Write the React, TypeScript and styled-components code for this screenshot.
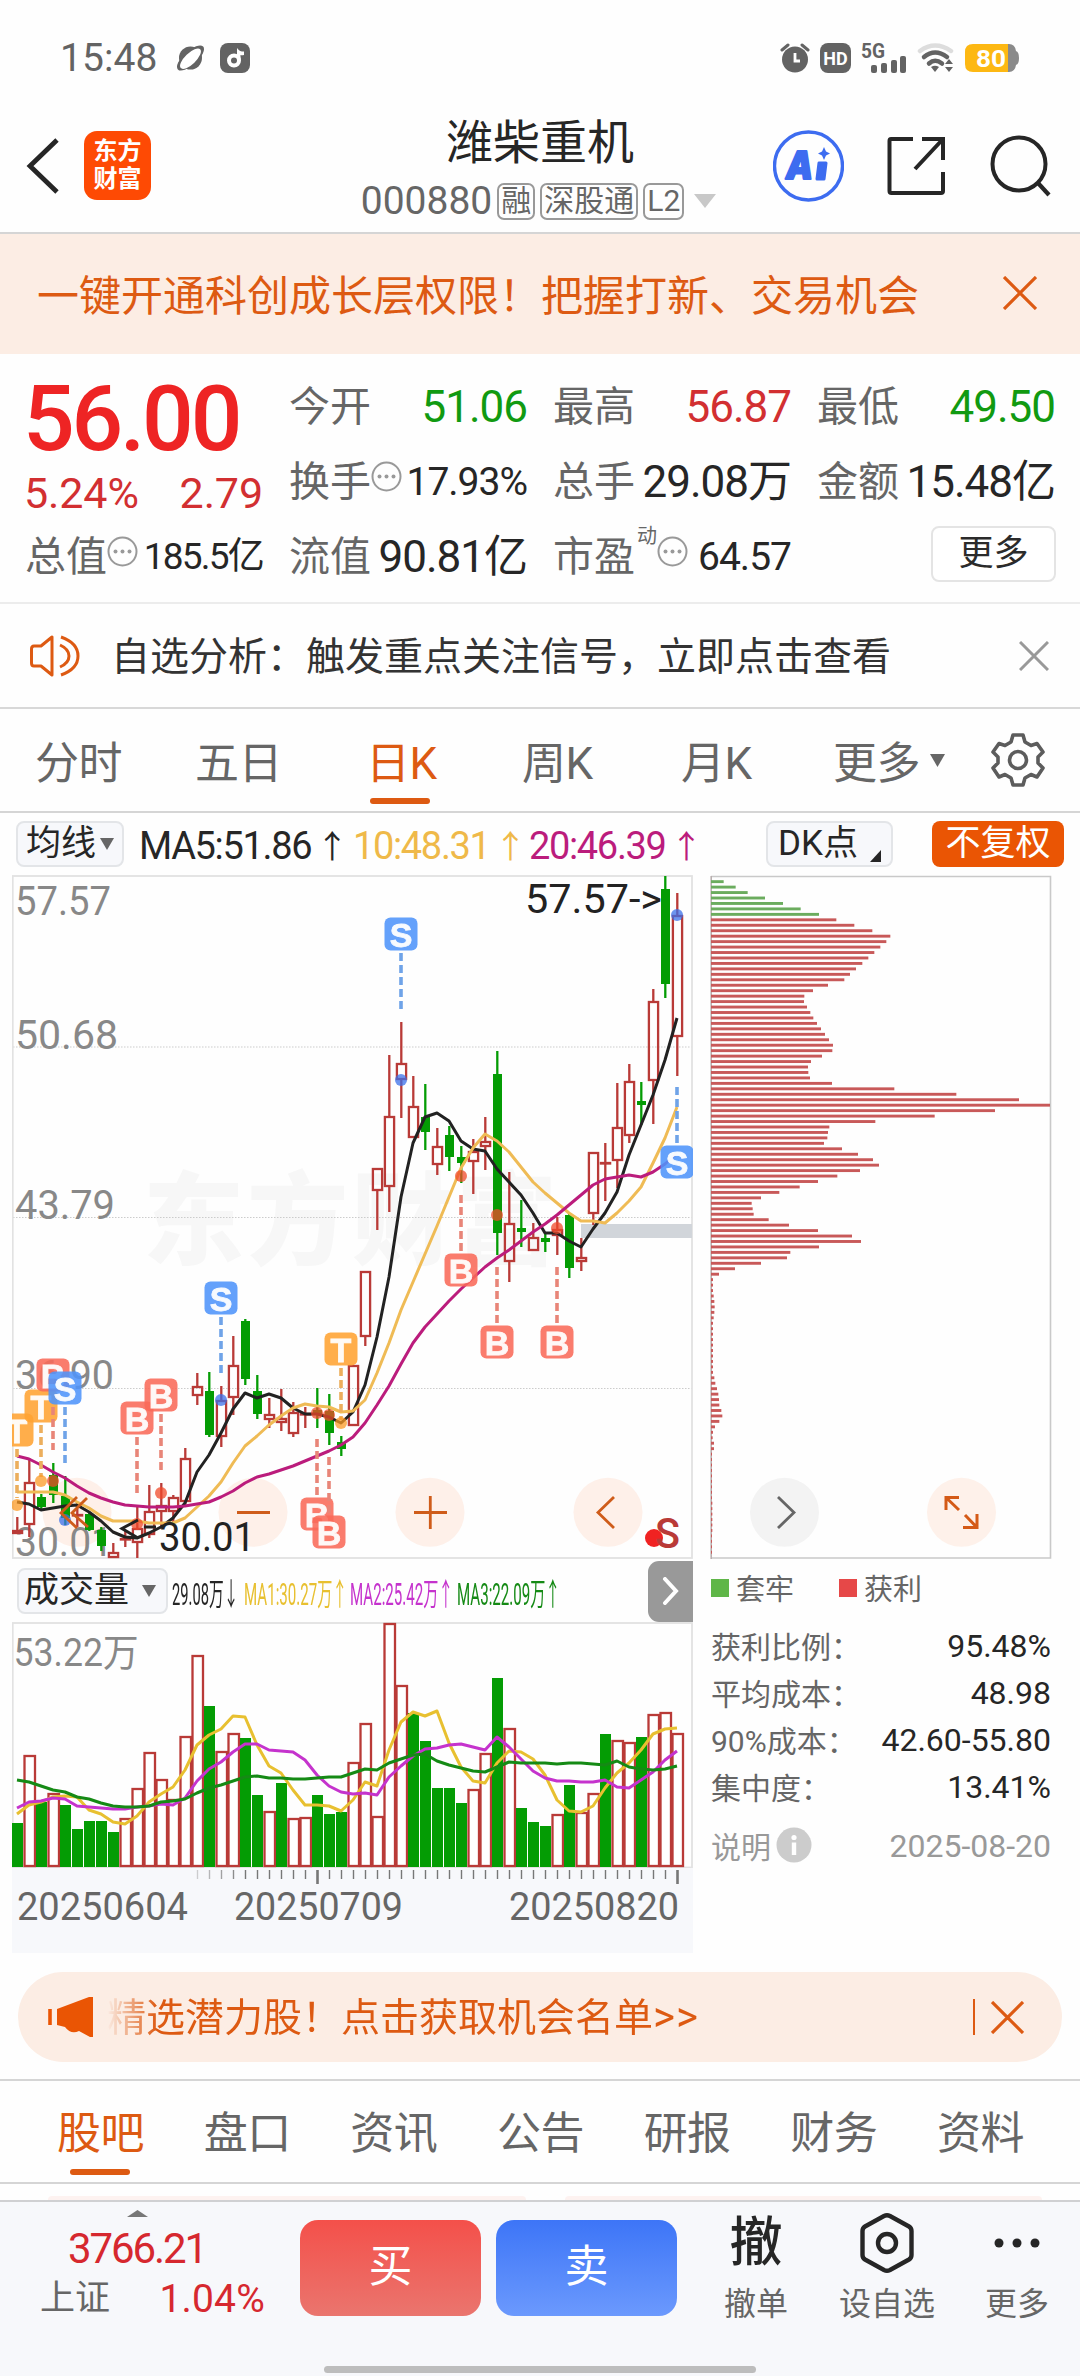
import React from "react";
import styled, { createGlobalStyle } from "styled-components";

const UP = "#b93a37";
const DOWN = "#049c04";
const ACCENT = "#dd5a12";

const Global = createGlobalStyle`
  * { box-sizing: border-box; }
  body { margin: 0; background: #fff; }
  svg { display: block; flex: none; }
`;

const Page = styled.div`
  width: 1080px;
  height: 2376px;
  overflow: hidden;
  display: flex;
  flex-direction: column;
  background: #fefefe;
  color: #2b2b2b;
  font-family: Roboto, "Noto Sans CJK SC", sans-serif;
  white-space: nowrap;
`;

/* ---------- status bar ---------- */
const StatusBar = styled.div`
  height: 100px;
  padding: 16px 61px 0 60px;
  display: flex;
  align-items: center;
  justify-content: space-between;
  color: #636363;
`;
const StatusGroup = styled.div<{ $gap: number }>`
  display: flex;
  align-items: center;
  gap: ${(p) => p.$gap}px;
`;
const Clock = styled.span`
  font-size: 39px;
  line-height: 40px;
  letter-spacing: 0.1px;
  margin-right: 3px;
`;

/* ---------- header ---------- */
const Header = styled.header`
  height: 134px;
  display: flex;
  border-bottom: 2px solid #d5d5d5;
`;
const HeaderSide = styled.div<{ $pad: string; $gap: number }>`
  width: 307px;
  display: flex;
  align-items: center;
  padding: ${(p) => p.$pad};
  gap: ${(p) => p.$gap}px;
`;
const Logo = styled.div`
  width: 67px;
  height: 69px;
  border-radius: 13px;
  background: #fe4a04;
  color: #fff;
  font-size: 24px;
  font-weight: 700;
  line-height: 28px;
  padding-bottom: 2px;
  display: flex;
  flex-direction: column;
  align-items: center;
  justify-content: center;
`;
const HeaderMid = styled.div`
  flex: 1;
  display: flex;
  flex-direction: column;
  align-items: center;
  padding-top: 16px;
`;
const Title = styled.h1`
  margin: 0;
  font-size: 47px;
  line-height: 54px;
  font-weight: 400;
  color: #262626;
`;
const CodeRow = styled.div`
  display: flex;
  align-items: center;
  height: 40px;
  margin-top: 11px;
  margin-left: -3px;
  gap: 5px;
  color: #666;
  font-size: 39px;
`;
const Tag = styled.span`
  height: 37px;
  border: 2px solid #999;
  border-radius: 7px;
  padding: 0 2px;
  font-size: 30px;
  line-height: 31px;
`;

/* ---------- banner ---------- */
const Banner = styled.div`
  height: 120px;
  background: #fcede4;
  color: ${ACCENT};
  display: flex;
  align-items: center;
  justify-content: space-between;
  padding: 0 43px 2px 37px;
  font-size: 42px;
  & > span { margin-bottom: 2px; }
`;

/* ---------- quote ---------- */
const Quote = styled.section`
  height: 250px;
  padding: 15px 25px 0 26px;
  border-bottom: 2px solid #ececec;
  display: grid;
  grid-template-columns: repeat(4, 237px);
  grid-template-rows: repeat(3, 75px);
  column-gap: 27px;
`;
const PriceCell = styled.div`
  grid-row: span 2;
  color: #ee2424;
  margin-left: -3px;
`;
const Price = styled.div`
  font-size: 91px;
  font-weight: 500;
  line-height: 100px;
  letter-spacing: -3.2px;
`;
const Change = styled.div`
  display: flex;
  justify-content: space-between;
  font-size: 43px;
  line-height: 48px;
  letter-spacing: -0.1px;
  margin-left: 1px;
  color: #d22f31;
`;
const Cell = styled.div`
  display: flex;
  align-items: center;
  justify-content: space-between;
`;
const Label = styled.span`
  display: flex;
  align-items: center;
  font-size: 41px;
  line-height: 50px;
  margin-left: -1px;
  color: #666;
  & > svg { margin-bottom: 10px; }
`;
const Sup = styled.span`
  align-self: flex-start;
  font-size: 20px;
  line-height: 20px;
  margin: -6px 0 0 2px;
`;
const Value = styled.span<{ $color?: string; $size?: number; $ls?: number }>`
  font-size: ${(p) => p.$size ?? 44}px;
  line-height: 50px;
  letter-spacing: ${(p) => p.$ls ?? -1}px;
  color: ${(p) => p.$color ?? "#262626"};
`;
const MoreButton = styled.button`
  justify-self: end;
  align-self: center;
  width: 125px;
  height: 56px;
  margin: -6px -1px 0 0;
  border: 2px solid #e4e4e4;
  border-radius: 8px;
  background: #fff;
  padding: 0;
  font: 400 35px/48px Roboto, "Noto Sans CJK SC", sans-serif;
  color: #2b2b2b;
`;

/* ---------- notice ---------- */
const Notice = styled.div`
  height: 105px;
  border-bottom: 2px solid #d8d8d8;
  display: flex;
  align-items: center;
  padding: 0 31px 0 30px;
  font-size: 39px;
  color: #333;
`;
const NoticeText = styled.span`
  flex: 1;
  margin: 0 0 5px 31px;
`;

/* ---------- tabs ---------- */
const Tabs = styled.nav`
  height: 103px;
  border-bottom: 2px solid #d5d5d5;
  display: flex;
  justify-content: space-between;
  padding: 0 56px 0 57px;
`;
const PeriodTabs = styled.nav`
  height: 104px;
  border-bottom: 2px solid #d5d5d5;
  display: grid;
  grid-template-columns: 160px 171px 156px 159px 152px 158px 54px;
  justify-items: start;
  align-items: center;
  padding-left: 35px;
`;
const Tab = styled.span<{ $on?: boolean; $lift?: number }>`
  height: 101px;
  padding-bottom: ${(p) => p.$lift ?? 0}px;
  display: flex;
  align-items: center;
  position: relative;
  font-size: 44px;
  letter-spacing: -0.5px;
  color: ${(p) => (p.$on ? ACCENT : "#666")};
  &::after {
    content: "";
    display: ${(p) => (p.$on ? "block" : "none")};
    position: absolute;
    left: 50%;
    margin-left: -31px;
    bottom: 7px;
    width: 60px;
    height: 6px;
    border-radius: 3px;
    background: ${ACCENT};
  }
`;

/* ---------- indicator toolbar ---------- */
const Toolbar = styled.div`
  height: 62px;
  display: flex;
  align-items: center;
  padding: 0 16px;
`;
const Chip = styled.span<{ $w: number; $solid?: boolean; $ml?: number; $pr?: number }>`
  flex: none;
  width: ${(p) => p.$w}px;
  height: 46px;
  margin-left: ${(p) => p.$ml ?? 0}px;
  padding-right: ${(p) => p.$pr ?? 0}px;
  border-radius: 8px;
  border: ${(p) => (p.$solid ? "0" : "2px solid #e3e5e8")};
  background: ${(p) => (p.$solid ? "#ea5504" : "#f7f8fb")};
  color: ${(p) => (p.$solid ? "#fff" : "#262626")};
  display: flex;
  align-items: center;
  justify-content: center;
  gap: 4px;
  font-size: 35px;
  line-height: 40px;
`;
const Corner = styled.i`
  align-self: flex-end;
  margin: 0 0 3px 8px;
`;
const MaText = styled.span<{ $w: number; $color: string }>`
  flex: none;
  width: ${(p) => p.$w}px;
  padding: 3px 0 0 15px;
  color: ${(p) => p.$color};
  font-size: 38px;
  letter-spacing: -1.35px;
  display: flex;
  align-items: center;
`;
const Arrow = styled.span`
  flex: none;
  font-family: "Noto Sans CJK SC", sans-serif;
  font-size: 32px;
  line-height: 40px;
  margin: 0 0 3px 5px;
`;

/* ---------- chart area ---------- */
const Charts = styled.div`
  display: flex;
  height: 1079px;
  padding-left: 12px;
`;
const LeftCol = styled.div`
  width: 681px;
  margin-right: 17px;
`;
const RightCol = styled.div`
  width: 342px;
`;
const VolBar = styled.div`
  height: 62px;
  display: flex;
  align-items: center;
  padding-left: 5px;
`;
const VolName = styled.span`
  margin-right: 9px;
`;
const VolItem = styled.span<{ $w: number; $color: string; $s: number; $ml?: number }>`
  width: ${(p) => p.$w}px;
  margin-left: ${(p) => p.$ml ?? 0}px;
  color: ${(p) => p.$color};
  font-size: 31px;
  & > span {
    display: inline-block;
    transform: scaleX(${(p) => p.$s});
    transform-origin: left center;
  }
`;
const NextButton = styled.span`
  margin-left: auto;
  width: 45px;
  height: 61px;
  border-radius: 11px 0 0 11px;
  background: #999;
  display: flex;
  align-items: center;
  justify-content: center;
`;
const Axis = styled.div`
  height: 85px;
  background: #f7f8fb;
`;
const Legend = styled.div`
  height: 62px;
  padding-bottom: 9px;
  display: flex;
  align-items: center;
  font-size: 29px;
  color: #666;
`;
const Swatch = styled.i<{ $c: string; $ml?: number }>`
  width: 18px;
  height: 18px;
  margin: 2px 7px 0 ${(p) => p.$ml ?? 1}px;
  background: ${(p) => p.$c};
`;
const Stat = styled.div<{ $muted?: boolean }>`
  height: 47px;
  margin-top: ${(p) => (p.$muted ? 12 : 0)}px;
  padding: 0 1px 0 1px;
  display: flex;
  justify-content: space-between;
  align-items: center;
  font-size: 30px;
  color: ${(p) => (p.$muted ? "#999" : "#666")};
  & > b {
    font-weight: 400;
    font-size: 32px;
    color: ${(p) => (p.$muted ? "#999" : "#262626")};
  }
  & > span {
    display: flex;
    align-items: center;
    gap: 5px;
    margin-bottom: 2px;
  }
`;

/* ---------- promo ---------- */
const Promo = styled.div`
  height: 90px;
  margin: 18px 18px 17px;
  border-radius: 45px;
  background: #fcede4;
  color: ${ACCENT};
  display: flex;
  align-items: center;
  padding: 0 38px 0 29px;
  font-size: 39px;
`;
const PromoText = styled.span`
  flex: 1;
  margin: 0 0 6px 14px;
  -webkit-mask-image: linear-gradient(90deg, transparent 0, #000 50px);
  mask-image: linear-gradient(90deg, transparent 0, #000 50px);
  & > i {
    font-style: normal;
    font-size: 42px;
    letter-spacing: 1px;
  }
`;
const Divider = styled.i`
  width: 2px;
  height: 36px;
  margin-right: 16px;
  background: ${ACCENT};
`;
const TopLine = styled.div`
  border-top: 2px solid #d5d5d5;
`;

const Peek = styled.div`
  height: 16px;
  display: flex;
  gap: 39px;
  padding: 12px 38px 0 48px;
  & > i {
    flex: 1;
    border-radius: 12px 12px 0 0;
    background: #fdf2f0;
  }
`;

/* ---------- bottom bar ---------- */
const Bottom = styled.footer`
  flex: 1;
  background: #f7f8fb;
  border-top: 2px solid #d0d0d2;
  display: flex;
  flex-direction: column;
  align-items: center;
`;
const BottomRow = styled.div`
  width: 1080px;
  height: 164px;
  display: flex;
`;
const Index = styled.div`
  width: 300px;
  padding: 8px 35px 0 40px;
  color: #d6282f;
  display: flex;
  flex-direction: column;
  & > svg { margin-left: 87px; }
`;
const IndexValue = styled.div`
  font-size: 42px;
  line-height: 50px;
  margin: 7px 0 0 28px;
  letter-spacing: -2.1px;
`;
const IndexRow = styled.div`
  display: flex;
  justify-content: space-between;
  align-items: center;
  line-height: 50px;
  font-size: 39px;
  letter-spacing: 0.2px;
  & > span {
    color: #666;
    font-size: 35px;
    letter-spacing: 0;
  }
`;
const Trade = styled.button<{ $from: string; $to: string }>`
  width: 181px;
  height: 96px;
  margin: 18px 15px 0 0;
  padding: 0 0 2px;
  border: 0;
  border-radius: 18px;
  background: linear-gradient(${(p) => p.$from}, ${(p) => p.$to});
  color: #fff;
  font: 400 44px/60px Roboto, "Noto Sans CJK SC", sans-serif;
`;
const Action = styled.div<{ $w: number }>`
  width: ${(p) => p.$w}px;
  display: flex;
  flex-direction: column;
  align-items: center;
  font-size: 32px;
  line-height: 40px;
  color: #666;
`;
const ActionIcon = styled.div`
  height: 82px;
  display: flex;
  align-items: center;
  font-size: 53px;
  font-weight: 500;
  color: #262626;
`;
const HomeBar = styled.i`
  width: 432px;
  height: 7px;
  border-radius: 4px;
  background: #bdbdbd;
`;

/* ---------- icons ---------- */
const Cross = ({ s, c, w = 3 }: { s: number; c: string; w?: number }) => (
  <svg width={s} height={s} viewBox={`0 0 ${s} ${s}`}>
    <path d={`M1 1L${s - 1} ${s - 1}M${s - 1} 1L1 ${s - 1}`} stroke={c} strokeWidth={w} fill="none" />
  </svg>
);
const Caret = ({ w, h, c, up }: { w: number; h: number; c: string; up?: boolean }) => (
  <svg width={w} height={h}>
    <path d={up ? `M0 ${h}H${w}L${w / 2} 0Z` : `M0 0H${w}L${w / 2} ${h}Z`} fill={c} />
  </svg>
);
const Dots = () => (
  <svg width="31" height="31" viewBox="0 0 31 31">
    <circle cx="15.500" cy="15.500" r="14" fill="none" stroke="#999" strokeWidth="2" />
    <g fill="#999">
      <circle cx="8.500" cy="15.500" r="2" />
      <circle cx="15.500" cy="15.500" r="2" />
      <circle cx="22.500" cy="15.500" r="2" />
    </g>
  </svg>
);

/* ---------- data ---------- */
// [isUp, high, low, bodyTop, bodyBottom] in chart pixels
const candles: [number, number, number, number, number][] = [
  [1, 642, 659, 655, 659], [1, 583, 662, 607, 650], [0, 619, 635, 622, 632], [0, 588, 628, 600, 620],
  [0, 601, 650, 621, 643], [1, 628, 652, 639, 640], [0, 637, 656, 639, 655], [0, 652, 676, 655, 671],
  [1, 668, 683, 677, 683], [1, 655, 672, 663, 664], [1, 632, 683, 653, 668], [1, 610, 663, 636, 660],
  [1, 608, 653, 630, 637], [1, 620, 648, 622, 637], [1, 573, 630, 583, 627], [1, 498, 530, 511, 521],
  [0, 497, 562, 516, 560], [1, 511, 572, 525, 562], [1, 461, 540, 490, 523], [0, 444, 510, 446, 504],
  [0, 500, 544, 516, 539], [1, 523, 553, 539, 545], [1, 514, 556, 543, 548], [1, 527, 562, 537, 559],
  [1, 532, 553, 538, 539], [0, 513, 553, 535, 540], [0, 519, 570, 536, 558], [0, 561, 581, 567, 574],
  [1, 490, 551, 490, 551], [1, 396, 471, 396, 462], [1, 293, 355, 293, 316], [1, 180, 337, 241, 312],
  [1, 147, 243, 188, 205], [1, 201, 263, 231, 263], [0, 209, 275, 242, 257], [1, 253, 300, 271, 290],
  [0, 251, 296, 260, 282], [0, 271, 308, 282, 288], [1, 264, 319, 276, 287], [1, 242, 295, 266, 272],
  [0, 176, 380, 199, 358], [1, 297, 407, 348, 387], [0, 325, 372, 353, 355], [1, 348, 376, 362, 376],
  [0, 359, 377, 363, 366], [1, 342, 380, 354, 361], [0, 339, 403, 340, 393], [1, 363, 396, 382, 387],
  [1, 277, 350, 277, 339], [1, 268, 326, 287, 288], [1, 208, 313, 252, 286], [1, 189, 268, 206, 261],
  [0, 207, 250, 226, 230], [1, 114, 249, 126, 206], [0, 1, 123, 14, 109], [1, 18, 201, 40, 162],
];
const ma5 = [627, 629, 635, 633, 631, 630, 637, 646, 657, 662, 663, 658, 652, 643, 628, 597, 580, 558, 534, 518, 523, 519, 523, 533, 539, 539, 542, 548, 537, 510, 462, 402, 322, 268, 242, 238, 246, 266, 274, 276, 294, 307, 320, 338, 358, 358, 366, 372, 354, 338, 317, 280, 250, 220, 185, 143];
const ma10 = [617, 617, 617, 617, 620, 627, 633, 641, 646, 646, 646, 648, 648, 648, 643, 632, 621, 607, 588, 571, 561, 550, 541, 533, 529, 531, 532, 537, 536, 525, 498, 468, 435, 407, 379, 351, 322, 293, 273, 259, 266, 277, 292, 307, 318, 328, 338, 346, 346, 348, 338, 326, 312, 288, 263, 232];
const ma20 = [581, 584, 590, 597, 603, 611, 618, 623, 627, 630, 631, 632, 632, 632, 631, 629, 627, 622, 616, 608, 602, 599, 595, 591, 586, 581, 576, 570, 562, 548, 530, 511, 489, 468, 452, 439, 426, 414, 403, 392, 383, 375, 366, 357, 349, 340, 330, 320, 310, 304, 302, 300, 302, 297, 289, 278];

type Mark = { i: number; k: "S" | "B" | "T"; y: number; from: number; to: number; dot: number };
const marks: Mark[] = [
  { i: 0, k: "T", y: 555, from: 574, to: 623, dot: 630 },
  { i: 2, k: "T", y: 531, from: 550, to: 602, dot: 606 },
  { i: 3, k: "B", y: 500, from: 532, to: 575, dot: 606 },
  { i: 4, k: "S", y: 513, from: 532, to: 588, dot: 645 },
  { i: 10, k: "B", y: 543, from: 562, to: 618, dot: 649 },
  { i: 12, k: "B", y: 520, from: 539, to: 595, dot: 618 },
  { i: 17, k: "S", y: 423, from: 442, to: 498, dot: 525 },
  { i: 25, k: "B", y: 639, from: 564, to: 620, dot: 538 },
  { i: 26, k: "B", y: 657, from: 582, to: 638, dot: 540 },
  { i: 27, k: "T", y: 474, from: 493, to: 545, dot: 548 },
  { i: 32, k: "S", y: 59, from: 78, to: 134, dot: 205 },
  { i: 37, k: "B", y: 395, from: 320, to: 376, dot: 301 },
  { i: 40, k: "B", y: 467, from: 392, to: 448, dot: 340 },
  { i: 45, k: "B", y: 467, from: 392, to: 448, dot: 353 },
  { i: 55, k: "S", y: 287, from: 212, to: 268, dot: 40 },
];
const markColor = { S: "#4f94fb", B: "#f96a59", T: "#ffa332" };
const lineColor = { S: "#6fa3e8", B: "#e88578", T: "#ecae5c" };
const dotColor = { S: "#3b70ea", B: "#f04a2a", T: "#fb9a24" };

// positive heights rise, negative fall; the number is the bar's top edge
const volumes = [-201, 133, -180, 171, -183, -207, -199, -199, -210, 196, 166, 130, 157, 177, 114, 33, -84, 129, 111, -116, -173, 189, -161, 196, 195, -173, -192, -190, 140, 101, 194, 1, 63, -91, -119, -166, -166, -181, 167, 131, -56, 106, -186, -200, -204, 192, -163, 190, 171, -112, 118, 120, -115, 92, 90, 111];
const vma1 = [192, 183, 180, 175, 174, 175, 188, 192, 200, 202, 194, 180, 172, 165, 148, 123, 113, 107, 94, 95, 123, 144, 151, 168, 183, 183, 184, 189, 178, 160, 164, 128, 100, 90, 94, 89, 121, 145, 159, 161, 141, 129, 130, 137, 153, 178, 189, 190, 184, 166, 151, 141, 128, 112, 107, 106];
const vma2 = [186, 180, 179, 176, 177, 184, 185, 186, 187, 187, 185, 184, 182, 183, 176, 159, 147, 140, 130, 122, 122, 128, 129, 130, 138, 153, 164, 170, 172, 171, 173, 155, 144, 134, 127, 126, 123, 122, 125, 128, 115, 125, 137, 149, 156, 159, 159, 160, 160, 158, 165, 166, 158, 150, 138, 129];
const vma3 = [158, 160, 164, 168, 170, 175, 177, 181, 184, 185, 185, 184, 180, 179, 177, 171, 166, 163, 159, 155, 154, 156, 156, 157, 157, 156, 155, 155, 151, 147, 148, 141, 137, 133, 132, 139, 143, 146, 149, 150, 145, 140, 141, 141, 141, 142, 141, 141, 142, 143, 139, 145, 147, 148, 147, 144];

// chip distribution, in thirds of a pixel
const chips = [38, 74, 110, 162, 216, 269, 324, 376, 430, 484, 538, 526, 508, 490, 472, 454, 435, 417, 400, 351, 306, 280, 279, 288, 298, 307, 318, 330, 342, 354, 366, 364, 333, 300, 291, 292, 297, 363, 550, 736, 924, 1017, 852, 671, 493, 355, 351, 349, 339, 393, 441, 486, 504, 447, 379, 321, 266, 205, 150, 122, 125, 128, 173, 234, 321, 423, 450, 324, 238, 228, 150, 72, 24, 6, 6, 6, 8, 10, 11, 10, 8, 6, 6, 6, 6, 6, 6, 6, 6, 6, 6, 10, 13, 18, 22, 24, 25, 31, 34, 25, 12, 6, 5, 9, 9, 3, 3, 3, 3, 3, 3, 3, 3, 3, 4, 4, 4, 4, 4, 4, 3, 3, 3, 3];

const cx = (i: number) => 5 + i * 12;
const line = (ys: number[]) => ys.map((y, i) => `${cx(i)},${y}`).join(" ");

const T = ({ x, y, w, s = 40, c = "#888", children }: { x: number; y: number; w: number; s?: number; c?: string; children: string }) => (
  <text x={x} y={y} fontSize={s} fill={c} textLength={w} lengthAdjust="spacingAndGlyphs">
    {children}
  </text>
);

const KLine = () => (
  <svg width="681" height="685" viewBox="0 0 681 685">
    <g fontFamily='"Noto Sans CJK SC", sans-serif' fontWeight="900" fontSize="101" fill="#f7f7f7">
      <text x="131" y="382" textLength="414">东方财富</text>
    </g>
    {[65, 241, 418, 596].map((x) => (
      <circle key={x} cx={x} cy="637.300" r="34.500" fill="#fef0e9" />
    ))}
    {[172, 342.500, 513.500].map((y) => (
      <path key={y} d={`M1 ${y}H680`} stroke="#ccc" strokeWidth="1.200" strokeDasharray="1.500 1.500" />
    ))}
    <rect x="0.750" y="1" width="679.250" height="682" fill="none" stroke="#e2e2e2" strokeWidth="1.800" />
    <T x={3} y={40} w={96}>57.57</T>
    <T x={3} y={173.500} w={103}>50.68</T>
    <T x={3} y={344} w={100}>43.79</T>
    <T x={3} y={514} w={99}>36.90</T>
    <T x={3} y={681} w={98}>30.01</T>
    <rect x="569" y="349" width="111" height="14" fill="#d1d5da" />
    {candles.map(([up, hi, lo, t, b], i) => (
      <g key={i}>
        {up ? (
          <>
            <path d={`M${cx(i) + 0.300} ${hi}V${t}M${cx(i) + 0.300} ${b}V${lo}`} stroke={UP} strokeWidth="2.300" />
            <rect x={cx(i) - 4.100} y={t + 1} width="9.200" height={Math.max(b - t - 2, 0.5)} fill="none" stroke={UP} strokeWidth="2.300" />
          </>
        ) : (
          <>
            <path d={`M${cx(i) + 0.300} ${hi}V${lo}`} stroke={DOWN} strokeWidth="2.300" />
            <rect x={cx(i) - 4} y={t} width="9" height={Math.max(b - t, 4)} fill={DOWN} />
          </>
        )}
      </g>
    ))}
    <g fill="none" strokeWidth="3" strokeLinejoin="round">
      <polyline points={line(ma5)} stroke="#222" />
      <polyline points={line(ma10)} stroke="#efbb55" />
      <polyline points={line(ma20)} stroke="#bb1c7c" />
    </g>
    {marks.map((m) => (
      <g key={m.i}>
        <path d={`M${cx(m.i)} ${m.from}V${m.to}`} stroke={lineColor[m.k]} strokeWidth="3.600" strokeDasharray="8 4" />
        <circle cx={cx(m.i)} cy={m.dot} r="6" fill={dotColor[m.k]} opacity="0.75" />
        <rect x={cx(m.i) - 16.500} y={m.y - 16.500} width="33" height="33" rx="6" fill={markColor[m.k]} opacity="0.88" />
        <text
          x={cx(m.i)} y={m.y + 12.500} textAnchor="middle" fontSize="34" fontWeight="600" fill="#fff" opacity="0.95"
          fontFamily='"Liberation Sans", Inter, sans-serif' stroke="#fff" strokeWidth="0.800"
        >
          {m.k}
        </text>
      </g>
    ))}
    <T x={513} y={38} w={137} s={40} c="#222">{"57.57->"}</T>
    <path d="M126 645L110 653.500L126 663M132 652H144" fill="none" stroke="#222" strokeWidth="3" />
    <T x={147} y={676} w={96} s={40} c="#222">30.01</T>
    <g fill="none" stroke="#cf5c1a" strokeWidth="2.800">
      <path d="M65 622L49 638L65 653M75 623L60 638L76 652" />
      <path d="M225 637.500H258M402 637.500H435M418.300 621V654M602 622L586 637.500L602 653" />
    </g>
    <circle cx="642" cy="663" r="9" fill="#f02222" />
    <text x="643" y="673" fontSize="42" fontWeight="500" fill="#b93a37" textLength="25" lengthAdjust="spacingAndGlyphs">S</text>
  </svg>
);

const Volume = () => (
  <svg width="681" height="246" viewBox="0 0 681 246">
    <rect x="0.750" y="1" width="679.250" height="244.500" fill="none" stroke="#e2e2e2" strokeWidth="1.800" />
    <T x={1.500} y={44} w={125} s={38}>53.22万</T>
    {volumes.map((v, i) =>
      v > 0 ? (
        <rect key={i} x={cx(i) - 4.500} y={v + 1} width="10.500" height={243 - v} fill="#fff" stroke={UP} strokeWidth="2.300" />
      ) : (
        <rect key={i} x={cx(i) - 5} y={-v} width="11" height={245 + v} fill={DOWN} />
      ),
    )}
    <g fill="none" strokeWidth="3" strokeLinejoin="round">
      <polyline points={line(vma1)} stroke="#e8c030" />
      <polyline points={line(vma2)} stroke="#c533cd" />
      <polyline points={line(vma3)} stroke="#158a15" />
    </g>
  </svg>
);

const DateAxis = () => (
  <svg width="681" height="85" viewBox="0 0 681 85">
    {Array.from({ length: 41 }, (_, n) => n + 15).map((i) => {
      const long = i === 25 || i === 55;
      return (
        <path
          key={i} d={`M${cx(i) + 0.500} 2V${long ? 16 : 11}`} stroke="#777"
          strokeWidth={long ? 2.6 : 1.4} opacity={Math.min(1, (i - 13) / 6)}
        />
      );
    })}
    <T x={5} y={52} w={171} s={39} c="#666">20250604</T>
    <T x={222} y={52} w={169} s={39} c="#666">20250709</T>
    <T x={497} y={52} w={170} s={39} c="#666">20250820</T>
  </svg>
);

const ChipChart = () => (
  <svg width="342" height="685" viewBox="0 0 342 685">
    <path d="M1 1.500H340.500V683H1" fill="none" stroke="#c9c9c9" strokeWidth="1.600" />
    <path d="M1.200 1V684" stroke="#b9b0b0" strokeWidth="1.600" />
    {chips.map((v, i) => (
      <rect key={i} x="1" y={5.200 + i * 5.452} width={v / 3} height="2.900" fill={i < 7 ? "#6bac5e" : "#c85959"} />
    ))}
    <circle cx="74.500" cy="637.300" r="34.500" fill="#f3f3f3" />
    <circle cx="251.500" cy="637.300" r="34.500" fill="#fef1ea" />
    <path d="M68 622L84 637.500L68 653" fill="none" stroke="#666" strokeWidth="2.800" />
    <path d="M236 635V622.500H249M236 622.500L249 635M255 640L267 652.500M267 639V652.500H253" fill="none" stroke="#d45a17" strokeWidth="3" />
  </svg>
);

const bottomTabs = ["股吧", "盘口", "资讯", "公告", "研报", "财务", "资料"];
const stats = [
  ["获利比例：", "95.48%"],
  ["平均成本：", "48.98"],
  ["90%成本：", "42.60-55.80"],
  ["集中度：", "13.41%"],
];

export default function App() {
  return (
    <Page>
      <Global />
      <StatusBar>
        <StatusGroup $gap={14}>
          <Clock>15:48</Clock>
          <svg width="31" height="30" viewBox="0 0 31 30">
            <ellipse cx="15.500" cy="15" rx="17" ry="7" transform="rotate(-42 15.500 15)" fill="#636363" />
            <circle cx="15.500" cy="15" r="11.500" fill="#636363" />
            <ellipse cx="15" cy="15.500" rx="13.500" ry="5.500" transform="rotate(-44 15.500 15)" fill="#fff" />
          </svg>
          <svg width="30" height="30" viewBox="0 0 30 30">
            <rect width="30" height="30" rx="8" fill="#636363" />
            <circle cx="14" cy="17.500" r="5" fill="none" stroke="#fff" strokeWidth="4" />
            <path d="M17 16V5C19 8 21 8.500 24 8.500V12C21 12.500 20.500 12 20.500 12V17Z" fill="#fff" />
          </svg>
        </StatusGroup>
        <StatusGroup $gap={10}>
          <svg width="30" height="30" viewBox="0 0 30 30">
            <circle cx="15" cy="16.500" r="13" fill="#636363" />
            <path d="M2 7L8 2M28 7L22 2" stroke="#636363" strokeWidth="3" strokeLinecap="round" />
            <path d="M15 10V18H20" stroke="#fff" strokeWidth="2.800" fill="none" />
          </svg>
          <svg width="31" height="30" viewBox="0 0 31 30">
            <rect width="31" height="30" rx="8" fill="#636363" />
            <text x="15.500" y="21.500" textAnchor="middle" fontSize="18" fontWeight="700" fill="#fff">HD</text>
          </svg>
          <svg width="46" height="32" viewBox="0 0 46 32">
            <text x="0" y="16" fontSize="20" fontWeight="700" fill="#636363" textLength="24" lengthAdjust="spacingAndGlyphs">5G</text>
            <g fill="#636363">
              <rect x="10" y="23" width="6" height="8" rx="2" />
              <rect x="20" y="21" width="6" height="10" rx="2" />
              <rect x="30" y="18" width="6" height="13" rx="2" />
              <rect x="39" y="14" width="6" height="17" rx="2" />
            </g>
          </svg>
          <svg width="38" height="30" viewBox="0 0 38 30">
            <g fill="none" strokeLinecap="round">
              <path d="M3 8Q18 -3 34 8" stroke="#ddd" strokeWidth="4.500" />
              <path d="M7 14Q18 5 30 14" stroke="#636363" strokeWidth="4.500" />
              <path d="M12 20.500Q18 15 25 20.500" stroke="#636363" strokeWidth="4.500" />
            </g>
            <path d="M14 24Q18 21.500 22 24L18 29Z" fill="#636363" />
            <path d="M28 21H36L32 16ZM28 24H36L32 29Z" fill="#636363" />
          </svg>
          <svg width="54" height="28" viewBox="0 0 54 28">
            <path d="M42 0H44Q50 0 51 7Q54 8 54 14T51 21Q50 28 44 28H42Z" fill="#8a8a8a" />
            <path d="M8 0H43V28H8Q0 28 0 20V8Q0 0 8 0Z" fill="#fdb813" />
            <text x="11" y="22.500" fontSize="24" fontWeight="700" fill="#fff" textLength="30" lengthAdjust="spacingAndGlyphs">80</text>
          </svg>
        </StatusGroup>
      </StatusBar>

      <Header>
        <HeaderSide $pad="0 0 1px 26px" $gap={24}>
          <svg width="34" height="56" viewBox="0 0 34 56">
            <path d="M31 2L4 28L31 54" fill="none" stroke="#262626" strokeWidth="4.800" />
          </svg>
          <Logo>
            <span>东方</span>
            <span>财富</span>
          </Logo>
        </HeaderSide>
        <HeaderMid>
          <Title>潍柴重机</Title>
          <CodeRow>
            <span>000880</span>
            <Tag>融</Tag>
            <Tag>深股通</Tag>
            <Tag>L2</Tag>
            <span />
            <Caret w={22} h={14} c="#c8c8c8" />
          </CodeRow>
        </HeaderMid>
        <HeaderSide $pad="0 0 1px 0" $gap={43}>
          <svg width="71" height="72" viewBox="0 0 71 72">
            <circle cx="35.500" cy="36" r="34" fill="none" stroke="#3d6cf0" strokeWidth="3.400" />
            <text x="13" y="49" fontFamily="Inter, sans-serif" fontSize="38" fontWeight="900" fill="#3d6cf0" stroke="#3d6cf0" strokeWidth="1.800" strokeLinejoin="round" fontStyle="italic" textLength="27" lengthAdjust="spacingAndGlyphs">A</text>
            <path d="M46 33H53L51 49H44Z" fill="#3d6cf0" stroke="#3d6cf0" strokeWidth="3" strokeLinejoin="round" />
            <path d="M51 17L53 21.500L57 23.500L53 25.500L51 30L49 25.500L45 23.500L49 21.500Z" fill="#3d6cf0" />
          </svg>
          <svg width="60" height="60" viewBox="0 0 60 60">
            <path d="M26 3H4Q2.500 3 2.500 5V55Q2.500 57 4.500 57H54Q56 57 56 55V36" fill="none" stroke="#262626" strokeWidth="4" />
            <path d="M35 3H56V24M56 3L28 33" fill="none" stroke="#262626" strokeWidth="4" />
          </svg>
          <svg width="62" height="62" viewBox="0 0 62 62">
            <circle cx="29" cy="29" r="26.500" fill="none" stroke="#262626" strokeWidth="4" />
            <path d="M48 48L59 60" stroke="#262626" strokeWidth="4.200" />
          </svg>
        </HeaderSide>
      </Header>

      <Banner>
        <span>一键开通科创成长层权限！把握打新、交易机会</span>
        <Cross s={34} c={ACCENT} w={3.2} />
      </Banner>

      <Quote>
        <PriceCell>
          <Price>56.00</Price>
          <Change>
            <span>5.24%</span>
            <span>2.79</span>
          </Change>
        </PriceCell>
        <Cell><Label>今开</Label><Value $color="#119a11">51.06</Value></Cell>
        <Cell><Label>最高</Label><Value $color="#d22f31">56.87</Value></Cell>
        <Cell><Label>最低</Label><Value $color="#119a11">49.50</Value></Cell>
        <Cell><Label>换手<Dots /></Label><Value $size={39}>17.93%</Value></Cell>
        <Cell><Label>总手</Label><Value>29.08万</Value></Cell>
        <Cell><Label>金额</Label><Value>15.48亿</Value></Cell>
        <Cell><Label>总值<Dots /></Label><Value $size={37} $ls={-1.8}>185.5亿</Value></Cell>
        <Cell><Label>流值</Label><Value>90.81亿</Value></Cell>
        <Cell><Label>市盈<Sup>动</Sup><Dots /></Label><Value $size={39}>64.57</Value></Cell>
        <MoreButton>更多</MoreButton>
      </Quote>

      <Notice>
        <svg width="50" height="42" viewBox="0 0 50 42">
          <g fill="none" stroke={ACCENT} strokeWidth="3">
            <path d="M22 2V40L11 31H4Q1.500 31 1.500 28V14Q1.500 11 4 11H11Z" strokeLinejoin="round" />
            <path d="M30 10Q39 14 39 21T30 32M31 2Q48 8 48 21T31 40" />
          </g>
        </svg>
        <NoticeText>自选分析：触发重点关注信号，立即点击查看</NoticeText>
        <Cross s={30} c="#999" />
      </Notice>

      <PeriodTabs>
        <Tab>分时</Tab>
        <Tab>五日</Tab>
        <Tab $on>日K</Tab>
        <Tab>周K</Tab>
        <Tab>月K</Tab>
        <StatusGroup $gap={10}>
          <Tab>更多</Tab>
          <Caret w={15} h={13} c="#666" />
        </StatusGroup>
        <svg width="54" height="54" viewBox="0 0 54 54">
          <g fill="none" stroke="#5c5c5c" strokeWidth="3.600" strokeLinejoin="round">
            <path d="M22 2H32L34 9L40 12.500L46 10.500L52 19L47 24V30L52 35L46 44L40 41.500L34 45L32 52H22L20 45L14 41.500L8 44L2 35L7 30V24L2 19L8 10.500L14 12.500L20 9Z" />
            <circle cx="27" cy="27" r="8.500" />
          </g>
        </svg>
      </PeriodTabs>

      <Toolbar>
        <Chip $w={108}>均线<Caret w={14} h={12} c="#666" /></Chip>
        <MaText $w={214} $color="#262626">MA5:51.86<Arrow>↑</Arrow></MaText>
        <MaText $w={176} $color="#efb949">10:48.31<Arrow>↑</Arrow></MaText>
        <MaText $w={200} $color="#bb1c7c">20:46.39<Arrow>↑</Arrow></MaText>
        <Chip $w={127} $ml={52}>
          DK点
          <Corner>
            <svg width="11" height="12" viewBox="0 0 11 12"><path d="M11 0V12H0Z" fill="#262626" /></svg>
          </Corner>
        </Chip>
        <Chip $w={132} $ml={39} $solid>不复权</Chip>
      </Toolbar>

      <Charts>
        <LeftCol>
          <KLine />
          <VolBar>
            <Chip $w={151} $pr={5}><VolName>成交量</VolName><Caret w={14} h={12} c="#666" /></Chip>
            <VolItem $w={72} $ml={4} $color="#262626" $s={0.475}><span>29.08万↓</span></VolItem>
            <VolItem $w={106} $color="#e8c030" $s={0.487}><span>MA1:30.27万↑</span></VolItem>
            <VolItem $w={107} $color="#c533cd" $s={0.487}><span>MA2:25.42万↑</span></VolItem>
            <VolItem $w={102} $color="#158a15" $s={0.487}><span>MA3:22.09万↑</span></VolItem>
            <NextButton>
              <svg width="17" height="28" viewBox="0 0 17 28"><path d="M3 2L14 14L3 26" fill="none" stroke="#fff" strokeWidth="4" strokeLinecap="round" /></svg>
            </NextButton>
          </VolBar>
          <Volume />
          <Axis><DateAxis /></Axis>
        </LeftCol>
        <RightCol>
          <ChipChart />
          <Legend>
            <Swatch $c="#5fb648" />套牢
            <Swatch $c="#e64848" $ml={45} />获利
          </Legend>
          {stats.map(([k, v]) => (
            <Stat key={k}><span>{k}</span><b>{v}</b></Stat>
          ))}
          <Stat $muted>
            <span>
              说明
              <svg width="36" height="36" viewBox="0 0 36 36">
                <circle cx="18" cy="18" r="17.500" fill="#ccc" />
                <circle cx="18" cy="10.500" r="2.600" fill="#fff" />
                <path d="M18 15.500V28" stroke="#fff" strokeWidth="4.400" />
              </svg>
            </span>
            <b>2025-08-20</b>
          </Stat>
        </RightCol>
      </Charts>

      <Promo>
        <svg width="46" height="40" viewBox="0 0 46 40">
          <path d="M10 12L42 0H46V40H43L32 34Q24 38 18 30L10 28Z" fill="#ea5504" />
          <path d="M3 12V28" stroke="#ea5504" strokeWidth="3.600" />
        </svg>
        <PromoText>精选潜力股！点击获取机会名单<i>&gt;&gt;</i></PromoText>
        <Divider />
        <Cross s={33} c={ACCENT} w={3.2} />
      </Promo>

      <TopLine />
      <Tabs>
        {bottomTabs.map((t, i) => (
          <Tab key={t} $on={i === 0} $lift={3}>{t}</Tab>
        ))}
      </Tabs>
      <Peek><i /><i /></Peek>

      <Bottom>
        <BottomRow>
          <Index>
            <Caret w={21} h={7} c="#777" up />
            <IndexValue>3766.21</IndexValue>
            <IndexRow><span>上证</span>1.04%</IndexRow>
          </Index>
          <Trade $from="#f4504a" $to="#ea756e">买</Trade>
          <Trade $from="#3d75f7" $to="#6b99fd">卖</Trade>
          <Action $w={128}><ActionIcon>撤</ActionIcon>撤单</Action>
          <Action $w={134}>
            <ActionIcon>
              <svg width="54" height="60" viewBox="0 0 54 60">
                <g fill="none" stroke="#262626" strokeWidth="4.400">
                  <path d="M24 3Q27 1.500 30 3L49 13.500Q51.500 15 51.500 18V42Q51.500 45 49 46.500L30 57Q27 58.500 24 57L5 46.500Q2.500 45 2.500 42V18Q2.500 15 5 13.500Z" />
                  <circle cx="27" cy="30" r="9" />
                </g>
              </svg>
            </ActionIcon>
            设自选
          </Action>
          <Action $w={126}>
            <ActionIcon>
              <svg width="46" height="10" viewBox="0 0 46 10">
                <g fill="#262626"><circle cx="5" cy="5" r="4.500" /><circle cx="23" cy="5" r="4.500" /><circle cx="41" cy="5" r="4.500" /></g>
              </svg>
            </ActionIcon>
            更多
          </Action>
        </BottomRow>
        <HomeBar />
      </Bottom>
    </Page>
  );
}
